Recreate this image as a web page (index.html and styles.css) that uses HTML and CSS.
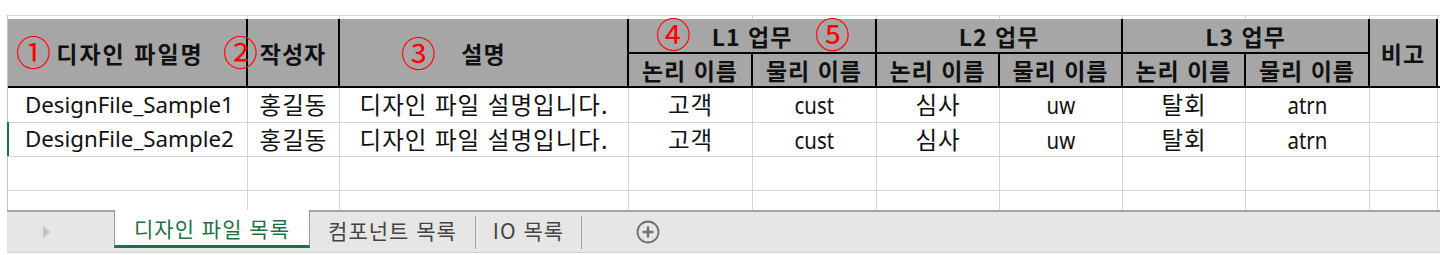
FILE: index.html
```html
<!DOCTYPE html>
<html lang="ko">
<head>
<meta charset="utf-8">
<title>디자인 파일 목록</title>
<link rel="stylesheet" href="styles.css">
</head>
<body>
<div class="page">
  <div class="sheet">
    <div class="pre"></div><div class="pre"></div><div class="pre"></div><div class="pre"></div><div class="pre"></div><div class="pre"></div><div class="pre"></div><div class="pre"></div><div class="pre"></div><div class="pre"></div><div class="pre last"></div>

    <div class="h tall first">디자인 파일명</div>
    <div class="h tall">작성자</div>
    <div class="h tall">설명</div>
    <div class="h wide">L1 업무</div>
    <div class="h wide">L2 업무</div>
    <div class="h wide">L3 업무</div>
    <div class="h tall">비고</div>
    <div class="h tall edge"></div>
    <div class="h">논리 이름</div>
    <div class="h">물리 이름</div>
    <div class="h">논리 이름</div>
    <div class="h">물리 이름</div>
    <div class="h">논리 이름</div>
    <div class="h">물리 이름</div>

    <div class="c left">DesignFile_Sample1</div>
    <div class="c ko">홍길동</div>
    <div class="c ko">디자인 파일 설명입니다.</div>
    <div class="c ko">고객</div>
    <div class="c"><span class="narrow">cust</span></div>
    <div class="c ko">심사</div>
    <div class="c"><span class="narrow">uw</span></div>
    <div class="c ko">탈회</div>
    <div class="c"><span class="narrow">atrn</span></div>
    <div class="c"></div>
    <div class="c last"></div>

    <div class="c left active">DesignFile_Sample2</div>
    <div class="c ko">홍길동</div>
    <div class="c ko">디자인 파일 설명입니다.</div>
    <div class="c ko">고객</div>
    <div class="c"><span class="narrow">cust</span></div>
    <div class="c ko">심사</div>
    <div class="c"><span class="narrow">uw</span></div>
    <div class="c ko">탈회</div>
    <div class="c"><span class="narrow">atrn</span></div>
    <div class="c"></div>
    <div class="c last"></div>

    <div class="c"></div><div class="c"></div><div class="c"></div><div class="c"></div><div class="c"></div><div class="c"></div><div class="c"></div><div class="c"></div><div class="c"></div><div class="c"></div><div class="c last"></div>

    <div class="c end"></div><div class="c end"></div><div class="c end"></div><div class="c end"></div><div class="c end"></div><div class="c end"></div><div class="c end"></div><div class="c end"></div><div class="c end"></div><div class="c end"></div><div class="c end last"></div>

    <span class="mark m1">①</span>
    <span class="mark m2">②</span>
    <span class="mark m3">③</span>
    <span class="mark m4">④</span>
    <span class="mark m5">⑤</span>
  </div>

  <div class="tabbar">
    <div class="nav"><span class="tri"></span></div>
    <div class="tab active-tab">디자인 파일 목록</div>
    <div class="tab t2">컴포넌트 목록</div>
    <div class="sep"></div>
    <div class="tab t3">IO 목록</div>
    <div class="sep"></div>
    <div class="rest">
      <span class="plus">
        <svg width="24" height="24" viewBox="0 0 24 24"><circle cx="12" cy="12" r="10.5" fill="none" stroke="#6e6e6e" stroke-width="1.8"/><path d="M12 6.5v11M6.5 12h11" stroke="#6e6e6e" stroke-width="2.4"/></svg>
      </span>
    </div>
  </div>
</div>
</body>
</html>
```

FILE: styles.css
```css
* { box-sizing: border-box; }

html, body {
  margin: 0;
  padding: 0;
  background: #ffffff;
}

body {
  width: 1440px;
  height: 255px;
  overflow: hidden;
  font-family: "Noto Sans", "Noto Sans CJK KR", sans-serif;
  color: #000;
}

.page {
  padding-top: 15px;
}

.sheet {
  position: relative;
  margin-left: 7px;
  border-left: 1px solid #c4c4c4;
  display: grid;
  grid-template-columns: 240px 92px 289px 124px 124px 123px 123px 123px 124px 68px 1fr;
  grid-template-rows: 4px 35px 34px 35px 34px 34px 19px;
}

.pre {
  border-top: 1px solid #d4d4d4;
  border-right: 1px solid #d4d4d4;
}
.pre.last { border-right: none; }

.h {
  background: #a6a6a6;
  border-right: 2px solid #000;
  border-bottom: 2px solid #000;
  display: flex;
  align-items: center;
  justify-content: center;
  font-family: "Noto Sans CJK KR", sans-serif;
  font-weight: 700;
  font-size: 23px;
  letter-spacing: 1px;
  line-height: 1;
  color: #111;
  padding-top: 1px;
  white-space: nowrap;
}
.h.first { letter-spacing: 2px; padding-left: 6px; }
.h.tall { grid-row: span 2; }
.h.wide { grid-column: span 2; }
.h.edge { background: #fff; border-right: none; border-bottom: 2px solid #000; }

.c {
  border-right: 1px solid #d4d4d4;
  border-bottom: 1px solid #d4d4d4;
  display: flex;
  align-items: center;
  justify-content: center;
  font-family: "Noto Sans", "Noto Sans CJK KR", sans-serif;
  font-size: 22.3px;
  line-height: 1;
  color: #111;
  white-space: nowrap;
  position: relative;
}
.c.ko {
  font-family: "Noto Sans CJK KR", sans-serif;
  font-size: 23.5px;
  letter-spacing: 1px;
}
.c.last { border-right: none; }
.c.end { border-bottom: none; }
.c.left { justify-content: flex-start; padding-left: 17px; }

.c.active::before {
  content: "";
  position: absolute;
  left: -1px;
  top: -1px;
  bottom: 0;
  width: 2px;
  background: #1e7145;
}

.narrow {
  display: inline-block;
  font-size: 24px;
  transform: scaleX(0.85);
}

.mark {
  position: absolute;
  color: #ff0000;
  font-family: "Noto Sans CJK KR", sans-serif;
  font-weight: 400;
  font-size: 35px;
  line-height: 1;
}
.m1 { left: 8px; top: 18px; }
.m2 { left: 215px; top: 18px; }
.m3 { left: 393px; top: 19px; }
.m4 { left: 648px; top: 0px; }
.m5 { left: 807px; top: 0px; }

.tabbar {
  margin-left: 7px;
  height: 43px;
  display: flex;
  background: #e6e6e6;
  border-bottom: 1px solid #cfcfcf;
  font-family: "Noto Sans CJK KR", sans-serif;
  font-size: 21px;
  letter-spacing: 1px;
  color: #444;
}

.nav {
  width: 107px;
  border-top: 2px solid #a3a3a3;
  display: flex;
  align-items: center;
  justify-content: center;
  padding-right: 28px;
}

.tri {
  width: 0;
  height: 0;
  border-top: 6px solid transparent;
  border-bottom: 6px solid transparent;
  border-left: 7px solid #c2c2c2;
}

.tab {
  display: flex;
  align-items: center;
  justify-content: center;
  border-top: 2px solid #a3a3a3;
  padding-bottom: 4px;
  white-space: nowrap;
}

.active-tab {
  width: 196px;
  background: #fff;
  border-top: none;
  border-left: 1px solid #9a9a9a;
  border-right: 1px solid #9a9a9a;
  border-bottom: 3px solid #1e7145;
  color: #1e7145;
  margin-bottom: 4px;
  padding-bottom: 0;
}

.t2 { width: 165px; }
.t3 { width: 105px; }

.sep {
  width: 1px;
  border-top: 2px solid #a3a3a3;
  background: linear-gradient(#e6e6e6 0, #e6e6e6 4px, #a0a0a0 4px, #a0a0a0 37px, #e6e6e6 37px);
}

.rest {
  flex: 1;
  border-top: 2px solid #a3a3a3;
  padding-left: 54px;
  display: flex;
  align-items: center;
}

.plus {
  display: flex;
  width: 24px;
  height: 24px;
}
```
